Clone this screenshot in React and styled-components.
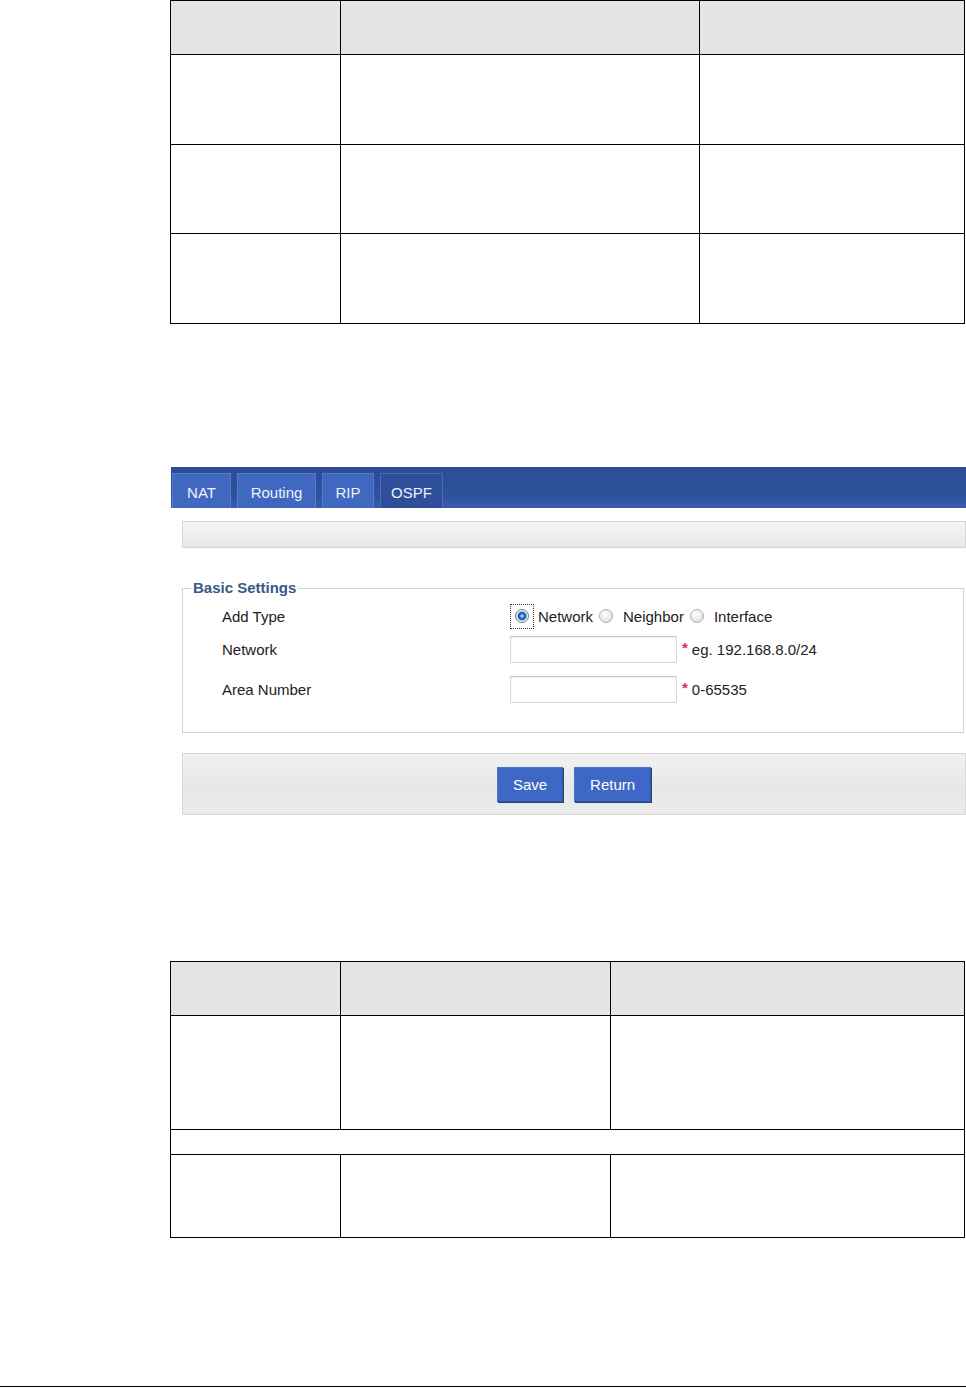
import React from "react";
import styled, { createGlobalStyle } from "styled-components";

const GlobalStyle = createGlobalStyle`
  html, body {
    margin: 0;
    padding: 0;
    background: #fff;
  }
  body {
    font-family: "Liberation Sans", Arial, sans-serif;
    color: #222;
  }
`;

const Page = styled.div`
  width: 966px;
  display: flex;
  flex-direction: column;
`;

const DocTable = styled.table`
  margin: ${(p) => p.$top}px 0 0 170px;
  width: 794px;
  border-collapse: collapse;
  table-layout: fixed;
`;

const HeadCell = styled.th`
  background: #e4e4e4;
  border: 1px solid #000;
  padding: 0;
  height: ${(p) => p.$h}px;
`;

const Cell = styled.td`
  border: 1px solid #000;
  padding: 0;
  height: ${(p) => p.$h}px;
`;

const Panel = styled.section`
  margin: 143px 0 0 171px;
  width: 795px;
`;

const TabBar = styled.div`
  height: 41px;
  box-sizing: border-box;
  padding-left: 1px;
  display: flex;
  align-items: flex-end;
  gap: 6px;
  background: linear-gradient(#2d4d97 0%, #2f509b 70%, #3a5cad 100%);
`;

const Tab = styled.div`
  width: ${(p) => p.$w}px;
  height: 35px;
  box-sizing: border-box;
  padding-top: 3px;
  display: flex;
  align-items: center;
  justify-content: center;
  font-size: 15px;
  color: #eef2fb;
  background: ${(p) => (p.$active ? "#2f4f9b" : "#4168c0")};
  border: 1px solid ${(p) => (p.$active ? "#4a6bbd" : "#5579cc")};
  border-bottom: none;
`;

const PanelBody = styled.div`
  padding: 13px 0 0 11px;
`;

const Strip = styled.div`
  height: 27px;
  box-sizing: border-box;
  border: 1px solid #d5d5d5;
  background: linear-gradient(#f5f5f5, #e8e8e8);
`;

const Fieldset = styled.fieldset`
  margin: 31px 2px 0 0;
  padding: 0;
  border: 1px solid #d3d3d3;
  min-width: 0;
`;

const Legend = styled.legend`
  margin-left: 8px;
  padding: 0 2px;
  font-size: 15px;
  line-height: 18px;
  font-weight: bold;
  color: #3a5889;
`;

const FieldGrid = styled.div`
  padding: 6px 0 29px 39px;
`;

const FieldRow = styled.div`
  display: grid;
  grid-template-columns: 288px 1fr;
  align-items: center;
  height: ${(p) => p.$h}px;
  margin-top: ${(p) => p.$mt || 0}px;
`;

const Label = styled.div`
  font-size: 15px;
  color: #222;
`;

const Value = styled.div`
  display: flex;
  align-items: center;
  font-size: 15px;
  color: #222;
`;

const Options = styled.div`
  display: flex;
  align-items: center;
  gap: 6px;
`;

const Option = styled.label`
  display: flex;
  align-items: center;
  gap: ${(p) => p.$gap}px;
`;

const FocusBox = styled.span`
  width: 24px;
  height: 25px;
  box-sizing: border-box;
  border: 1px dotted #333;
  display: flex;
  align-items: center;
  justify-content: center;
`;

const Radio = styled.span`
  width: 14px;
  height: 14px;
  box-sizing: border-box;
  border-radius: 50%;
  border: 1px solid ${(p) => (p.$checked ? "#6c7f96" : "#a9aeb4")};
  background: ${(p) =>
    p.$checked
      ? "radial-gradient(circle at 50% 50%, #9fd0ff 0 1px, #2f78c8 2px, #1f5aa0 3.8px, #dfe6ee 4.8px)"
      : "radial-gradient(circle at 40% 35%, #ffffff 0, #f0f0f0 40%, #d6d6d6 100%)"};
`;

const TextInput = styled.input`
  width: 167px;
  height: 27px;
  box-sizing: border-box;
  margin: 0;
  border: 1px solid #d6d6d6;
  border-top-color: #c4c4c4;
  background: #fff;
  box-shadow: inset 0 1px 2px rgba(0, 0, 0, 0.06);
  outline: none;
`;

const Required = styled.span`
  margin-left: 5px;
  color: #d8324a;
  font-weight: bold;
  font-size: 15px;
  position: relative;
  top: -2px;
`;

const Hint = styled.span`
  margin-left: 4px;
`;

const ButtonBar = styled.div`
  margin-top: 20px;
  height: 62px;
  box-sizing: border-box;
  border: 1px solid #d8d8d8;
  background: linear-gradient(#f1f1f1, #e7e7e7 60%, #ececec);
  display: flex;
  align-items: center;
  justify-content: center;
  gap: 11px;
`;

const Button = styled.button`
  height: 35px;
  padding: 0 15px;
  margin: 0;
  font-family: "Liberation Sans", Arial, sans-serif;
  font-size: 15px;
  color: #fff;
  background: #3d68c6;
  border: 1px solid #2f559f;
  border-top-color: #4b74cc;
  border-left-color: #4b74cc;
  box-shadow: 1px 1px 0 #27457f;
`;

const FooterRule = styled.div`
  margin-top: 148px;
  height: 1px;
  background: #000;
`;

const topRows = [53, 89, 88, 89];

export default function App() {
  return (
    <Page>
      <GlobalStyle />
      <DocTable $top={0}>
        <colgroup>
          <col style={{ width: 170 }} />
          <col style={{ width: 359 }} />
          <col style={{ width: 265 }} />
        </colgroup>
        <thead>
          <tr>
            <HeadCell $h={topRows[0]} />
            <HeadCell $h={topRows[0]} />
            <HeadCell $h={topRows[0]} />
          </tr>
        </thead>
        <tbody>
          {topRows.slice(1).map((h, i) => (
            <tr key={i}>
              <Cell $h={h} />
              <Cell $h={h} />
              <Cell $h={h} />
            </tr>
          ))}
        </tbody>
      </DocTable>

      <Panel>
        <TabBar>
          <Tab $w={59}>NAT</Tab>
          <Tab $w={79}>Routing</Tab>
          <Tab $w={52}>RIP</Tab>
          <Tab $w={63} $active>OSPF</Tab>
        </TabBar>
        <PanelBody>
          <Strip />
          <Fieldset>
            <Legend>Basic Settings</Legend>
            <FieldGrid>
              <FieldRow $h={26}>
                <Label>Add Type</Label>
                <Value>
                  <Options>
                    <Option $gap={4}>
                      <FocusBox>
                        <Radio $checked />
                      </FocusBox>
                      Network
                    </Option>
                    <Option $gap={10}>
                      <Radio />
                      Neighbor
                    </Option>
                    <Option $gap={10}>
                      <Radio />
                      Interface
                    </Option>
                  </Options>
                </Value>
              </FieldRow>
              <FieldRow $h={27} $mt={7}>
                <Label>Network</Label>
                <Value>
                  <TextInput />
                  <Required>*</Required>
                  <Hint>eg. 192.168.8.0/24</Hint>
                </Value>
              </FieldRow>
              <FieldRow $h={27} $mt={13}>
                <Label>Area Number</Label>
                <Value>
                  <TextInput />
                  <Required>*</Required>
                  <Hint>0-65535</Hint>
                </Value>
              </FieldRow>
            </FieldGrid>
          </Fieldset>
          <ButtonBar>
            <Button>Save</Button>
            <Button>Return</Button>
          </ButtonBar>
        </PanelBody>
      </Panel>

      <DocTable $top={146}>
        <colgroup>
          <col style={{ width: 170 }} />
          <col style={{ width: 270 }} />
          <col style={{ width: 354 }} />
        </colgroup>
        <thead>
          <tr>
            <HeadCell $h={53} />
            <HeadCell $h={53} />
            <HeadCell $h={53} />
          </tr>
        </thead>
        <tbody>
          <tr>
            <Cell $h={113} />
            <Cell $h={113} />
            <Cell $h={113} />
          </tr>
          <tr>
            <Cell $h={24} colSpan={3} />
          </tr>
          <tr>
            <Cell $h={82} />
            <Cell $h={82} />
            <Cell $h={82} />
          </tr>
        </tbody>
      </DocTable>

      <FooterRule />
    </Page>
  );
}
